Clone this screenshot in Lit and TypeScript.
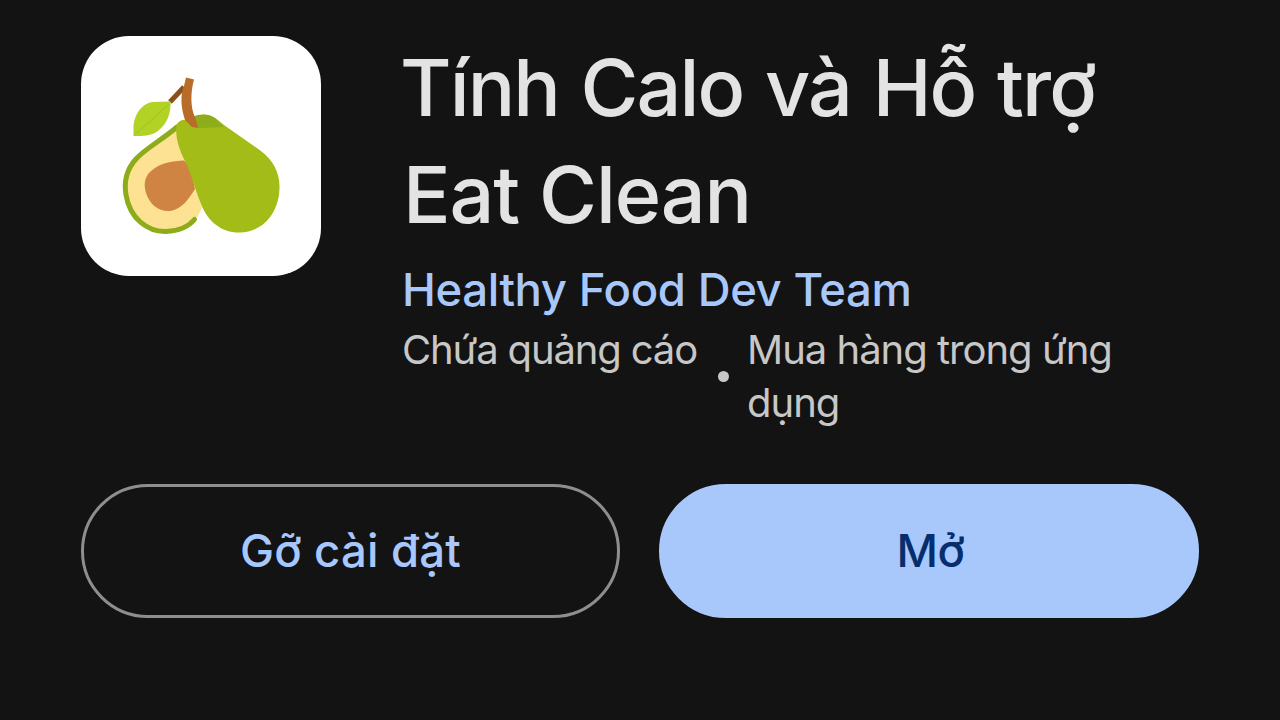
import { LitElement, html, css, svg } from "lit";

type AppInfo = {
  title: string[];
  developer: string;
  notes: string[];
};

const APP: AppInfo = {
  title: ["Tính Calo và Hỗ trợ", "Eat Clean"],
  developer: "Healthy Food Dev Team",
  notes: ["Chứa quảng cáo", "Mua hàng trong ứng dụng"],
};

const avocado = svg`
  <path fill="#fde293" d="M96 92C80 104 65 111 54 122C44 133 42 146 44 160C48 184 66 197 85 196C99 195 110 190 116 182L121 172L108 128Z" />
  <path fill="none" stroke="#8cac19" stroke-width="5" stroke-linecap="round" d="M96 91C81 104 65 112 55 123C45 134 43 147 45 159C49 183 67 196 85 195.500C98 195 108 190 113.500 183.500" />
  <path fill="#cf8443" d="M103 124.500C92 125 81 127 74 132C64 138 62 147 65 157C69 169 78 176 89 175C101 173 107 164 114 153L109 130Z" />
  <path fill="#a3bc18" d="M95.500 89C98 84 103 83 108 84.500C113 80 119 78 126 79C133 80 137 84 143 89L180 115C192 124 199 137 198.500 152C198 177 182 196 159 196.500C141 197 127 186 120 168C114 153 111 140 104 125C98 113 94 101 95.500 89Z" />
  <path fill="#8dad19" d="M112 81C120 77 130 78 136 84L143 91L118 92Z" />
  <path fill="none" stroke="#8b5019" stroke-width="5" d="M89 66L103 51" />
  <path fill="#b76c29" d="M105 41.500L113 43.500C109 58 110 72 113.500 80L117.500 92L111 91L104 84C100 72 99 59 103 50Z" />
  <path fill="#b2d326" d="M52.500 100V89C54 77 61 68 71 66L89.500 65.500C90 76 87 87 77 95C70 100 62 100 52.500 100Z" />
  <path fill="none" stroke="#a6ca20" stroke-width="1.500" d="M53 99C64 91 73 81 88 68" />
`;

class StoreButton extends LitElement {
  filled = false;

  static get properties() {
    return {
      filled: { type: Boolean, reflect: true },
    };
  }

  render() {
    return html`<button><slot></slot></button>`;
  }

  static get styles() {
    return css`
      :host {
        display: block;
      }

      button {
        display: block;
        box-sizing: border-box;
        width: 100%;
        height: 134px;
        padding: 0 0 2px;
        border: 3px solid #8e8e8e;
        border-radius: 67px;
        background: transparent;
        color: #a8c7fa;
        font: 500 45.5px Inter, "Liberation Sans", sans-serif;
        letter-spacing: 0.2px;
      }

      :host([filled]) button {
        padding-left: 3px;
        border-color: #a8c7fa;
        background: #a8c7fa;
        color: #062e6f;
        letter-spacing: -0.5px;
      }
    `;
  }
}
customElements.define("store-button", StoreButton);

class AppRoot extends LitElement {
  render() {
    return html`
      <header>
        <svg class="icon" viewBox="0 0 240 240">${avocado}</svg>
        <div class="info">
          <h1>
            ${APP.title.map((line) => html`<span>${line}</span>`)}
          </h1>
          <a class="developer">${APP.developer}</a>
          <div class="notes">
            <span class="ads">${APP.notes[0]}</span>
            <i class="dot"></i>
            <span class="purchases">${APP.notes[1]}</span>
          </div>
        </div>
      </header>
      <div class="actions">
        <store-button>Gỡ cài đặt</store-button>
        <store-button filled>Mở</store-button>
      </div>
    `;
  }

  static get styles() {
    return css`
      :host {
        display: block;
        box-sizing: border-box;
        width: 1280px;
        height: 720px;
        padding: 34px 81px 0;
        overflow: hidden;
        background: #131313;
        font-family: Inter, "Liberation Sans", sans-serif;
      }

      header {
        display: flex;
        align-items: flex-start;
        gap: 81px;
        height: 450px;
      }

      .icon {
        flex: none;
        width: 240px;
        height: 240px;
        margin-top: 2px;
        border-radius: 48px;
        background: #fff;
      }

      .info {
        display: flex;
        flex-direction: column;
        width: 740px;
      }

      h1 {
        margin: 0;
        color: #e3e3e3;
        font-size: 79px;
        font-weight: 500;
        line-height: 107px;
        letter-spacing: -1.9px;
        word-spacing: 2.5px;
        white-space: nowrap;
      }

      h1 span {
        display: block;
        margin-left: -2px;
      }

      h1 span + span {
        margin-left: 1px;
        letter-spacing: -1.1px;
        word-spacing: 0;
      }

      .developer {
        margin-top: 14px;
        color: #a8c7fa;
        font-size: 45.5px;
        font-weight: 500;
        line-height: 56px;
        letter-spacing: -0.4px;
        word-spacing: 0.5px;
        white-space: nowrap;
      }

      .notes {
        display: flex;
        align-items: center;
        margin-top: 5px;
        color: #c7c7c7;
        font-size: 40px;
        line-height: 53px;
        letter-spacing: -1px;
      }

      .ads {
        flex: none;
        align-self: flex-start;
        width: 316px;
        letter-spacing: -1.15px;
        white-space: nowrap;
      }

      .dot {
        flex: none;
        width: 11px;
        height: 11px;
        margin-right: 18px;
        border-radius: 50%;
        background: #c7c7c7;
      }

      .purchases {
        width: 380px;
      }

      .actions {
        display: grid;
        grid-template-columns: 539px 540px;
        gap: 39px;
      }
    `;
  }
}
customElements.define("app-root", AppRoot);
